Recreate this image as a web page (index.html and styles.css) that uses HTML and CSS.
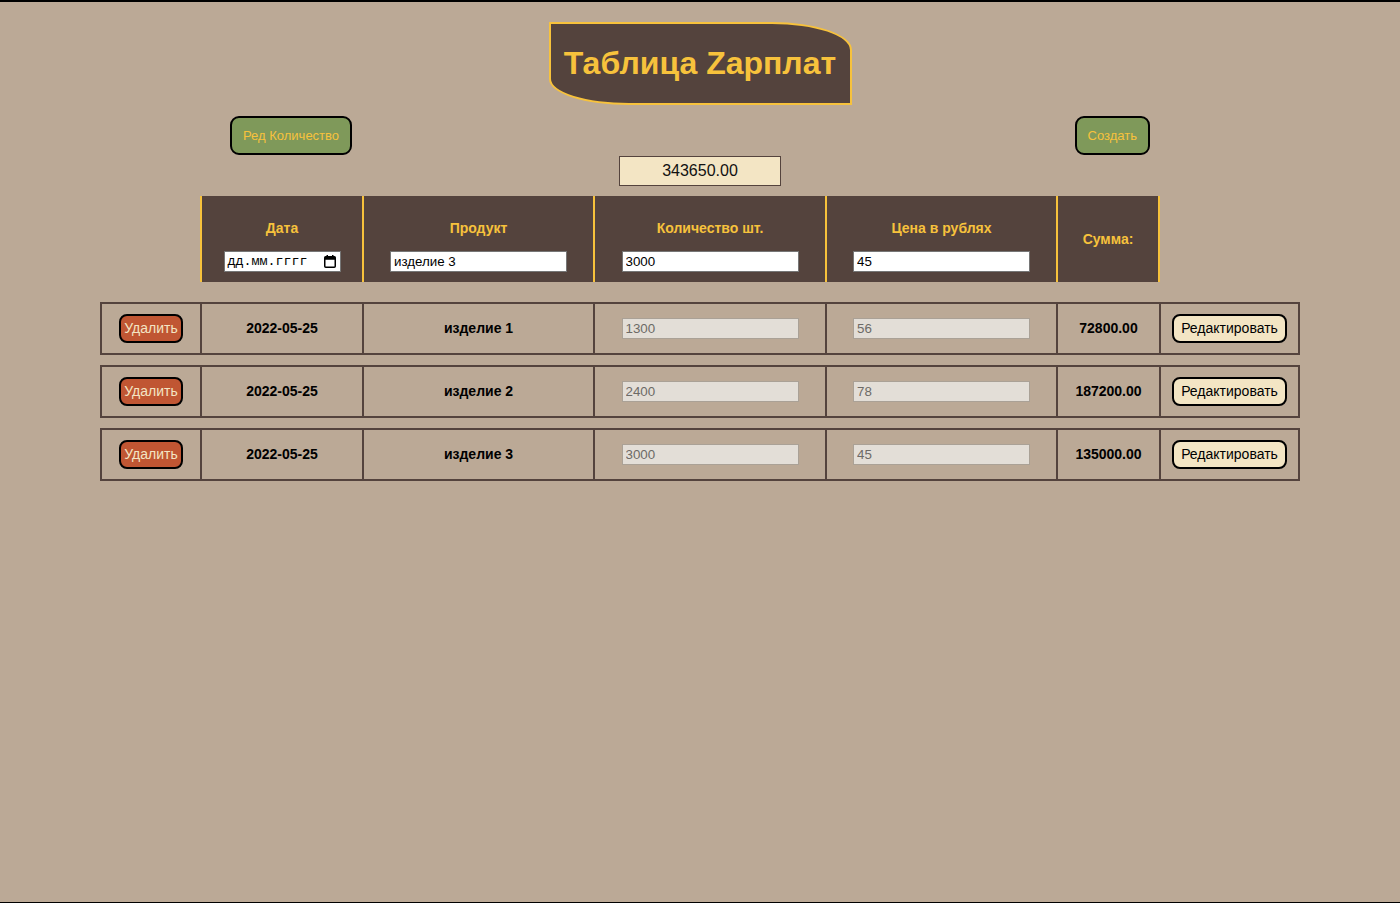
FILE: index.html
```html
<!DOCTYPE html>
<html lang="ru">
<head>
<meta charset="utf-8">
<title>Таблица Zарплат</title>
<link rel="stylesheet" href="styles.css">
</head>
<body>
<div class="page">
  <div class="title-wrap">
    <h1 class="title">Таблица Zарплат</h1>
  </div>

  <div class="actions">
    <button class="btn-green">Ред Количество</button>
    <button class="btn-green">Создать</button>
  </div>

  <div class="total-wrap">
    <div class="total">343650.00</div>
  </div>

  <div class="head">
    <div class="hcell c-date">
      <div class="htitle">Дата</div>
      <div class="date-input">
        <span class="date-text">дд.мм.гггг</span>
        <svg class="cal" width="12" height="13" viewBox="0 0 12 13" aria-hidden="true">
          <rect x="0.75" y="1.75" width="10.5" height="10.5" rx="1" fill="none" stroke="#000" stroke-width="1.5"/>
          <rect x="0.75" y="1.75" width="10.5" height="3" fill="#000"/>
          <rect x="2.5" y="0" width="1.5" height="2.5" fill="#000"/>
          <rect x="8" y="0" width="1.5" height="2.5" fill="#000"/>
        </svg>
      </div>
    </div>
    <div class="hcell c-prod">
      <div class="htitle">Продукт</div>
      <input class="hinput" type="text" value="изделие 3">
    </div>
    <div class="hcell c-qty">
      <div class="htitle">Количество шт.</div>
      <input class="hinput" type="text" value="3000">
    </div>
    <div class="hcell c-price">
      <div class="htitle">Цена в рублях</div>
      <input class="hinput" type="text" value="45">
    </div>
    <div class="hcell c-sum hcell-mid">
      <div class="htitle">Сумма:</div>
    </div>
  </div>

  <div class="rows">
    <div class="row">
      <div class="cell"><button class="btn-del">Удалить</button></div>
      <div class="cell">2022-05-25</div>
      <div class="cell">изделие 1</div>
      <div class="cell"><input class="rinput" type="text" value="1300" disabled></div>
      <div class="cell"><input class="rinput" type="text" value="56" disabled></div>
      <div class="cell">72800.00</div>
      <div class="cell"><button class="btn-edit">Редактировать</button></div>
    </div>
    <div class="row">
      <div class="cell"><button class="btn-del">Удалить</button></div>
      <div class="cell">2022-05-25</div>
      <div class="cell">изделие 2</div>
      <div class="cell"><input class="rinput" type="text" value="2400" disabled></div>
      <div class="cell"><input class="rinput" type="text" value="78" disabled></div>
      <div class="cell">187200.00</div>
      <div class="cell"><button class="btn-edit">Редактировать</button></div>
    </div>
    <div class="row">
      <div class="cell"><button class="btn-del">Удалить</button></div>
      <div class="cell">2022-05-25</div>
      <div class="cell">изделие 3</div>
      <div class="cell"><input class="rinput" type="text" value="3000" disabled></div>
      <div class="cell"><input class="rinput" type="text" value="45" disabled></div>
      <div class="cell">135000.00</div>
      <div class="cell"><button class="btn-edit">Редактировать</button></div>
    </div>
  </div>
</div>
</body>
</html>
```

FILE: styles.css
```css
* { box-sizing: border-box; }

html, body {
  margin: 0;
  padding: 0;
}

body {
  background: #bba996;
  font-family: "Liberation Sans", Arial, sans-serif;
  color: #000;
}

.page {
  height: 903px;
  border-top: 2px solid #000;
  border-bottom: 1px solid #000;
  overflow: hidden;
}

.title-wrap {
  display: flex;
  justify-content: center;
  margin-top: 20px;
}

.title {
  margin: 0;
  width: 303px;
  height: 83px;
  display: flex;
  align-items: center;
  justify-content: center;
  background: #54433d;
  border: 2px solid #f7c23c;
  border-radius: 0 80px 0 80px / 0 28px 0 26px;
  color: #f7c23c;
  font-size: 32px;
  font-weight: bold;
  padding-bottom: 1px;
}

.actions {
  width: 960px;
  margin: 11px 0 0 200px;
  padding: 0 10px 0 30px;
  display: flex;
  justify-content: space-between;
}

.btn-green {
  height: 39px;
  padding: 0 11px;
  background: #7f995a;
  border: 2px solid #000;
  border-radius: 9px;
  color: #f7c23c;
  font-family: "Liberation Sans", Arial, sans-serif;
  font-size: 13px;
}

.total-wrap {
  display: flex;
  justify-content: center;
  margin-top: 1px;
}

.total {
  width: 162px;
  height: 30px;
  background: #f3e5c4;
  border: 1px solid #54433d;
  display: flex;
  align-items: center;
  justify-content: center;
  font-size: 16px;
  color: #111;
}

.head {
  width: 960px;
  height: 86px;
  margin: 10px 0 0 200px;
  display: grid;
  grid-template-columns: 162px 231px 232px 231px 104px;
  background: #54433d;
}

.hcell {
  border-left: 2px solid #f7c23c;
  display: flex;
  flex-direction: column;
  align-items: center;
  padding-top: 24px;
}

.c-sum {
  border-right: 2px solid #f7c23c;
}

.hcell-mid {
  justify-content: center;
  padding-top: 0;
}

.htitle {
  color: #f7c23c;
  font-size: 14px;
  font-weight: bold;
  line-height: 16px;
}

.hinput {
  margin-top: 15px;
  width: 177px;
  height: 21px;
  border: 1px solid #767676;
  background: #fff;
  padding: 1px 3px;
  font-family: "Liberation Sans", Arial, sans-serif;
  font-size: 13.333px;
  color: #000;
}

.date-input {
  margin-top: 15px;
  width: 117px;
  height: 21px;
  border: 1px solid #767676;
  background: #fff;
  display: flex;
  align-items: center;
  justify-content: space-between;
  padding: 0 4px 0 3px;
}

.date-text {
  font-family: "Liberation Mono", "DejaVu Sans Mono", monospace;
  font-size: 13.333px;
  color: #000;
}

.cal {
  display: block;
}

.rows {
  margin-top: 20px;
  display: flex;
  flex-direction: column;
  gap: 10px;
}

.row {
  width: 1200px;
  height: 53px;
  margin: 0 auto;
  border: 2px solid #54433d;
  display: grid;
  grid-template-columns: 98px 162px 231px 232px 231px 103px 139px;
}

.cell {
  display: flex;
  align-items: center;
  justify-content: center;
  font-size: 14px;
  font-weight: bold;
  border-left: 2px solid #54433d;
  padding-bottom: 1px;
}

.cell:first-child {
  border-left: none;
}

.rinput {
  width: 177px;
  height: 21px;
  border: 1px solid #aaa196;
  background: #e3ded7;
  padding: 1px 3px;
  font-family: "Liberation Sans", Arial, sans-serif;
  font-size: 13.333px;
  font-weight: normal;
  color: #6d6a66;
}

.btn-del {
  width: 64px;
  height: 29px;
  padding: 0;
  background: #c05633;
  border: 2px solid #000;
  border-radius: 8px;
  color: #f3e5c4;
  font-family: "Liberation Sans", Arial, sans-serif;
  font-size: 14px;
}

.btn-edit {
  width: 115px;
  height: 29px;
  padding: 0;
  background: #f3e5c4;
  border: 2px solid #000;
  border-radius: 8px;
  color: #000;
  font-family: "Liberation Sans", Arial, sans-serif;
  font-size: 14px;
}
```
